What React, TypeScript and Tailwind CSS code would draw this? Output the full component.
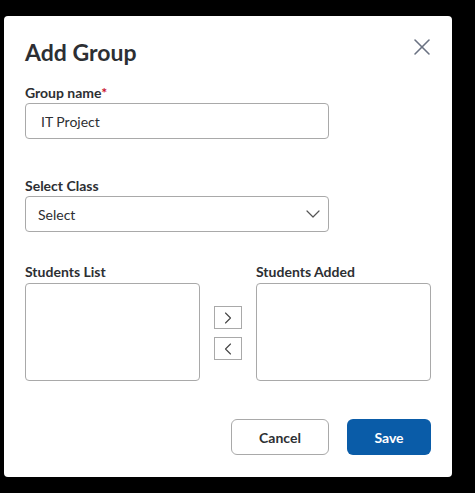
import React from 'react';
import { X, ChevronDown, ChevronRight, ChevronLeft } from 'lucide-react';

const font = { fontFamily: 'Lato, "Noto Sans", sans-serif' };

export default function App() {
  return (
    <div className="w-[475px] h-[493px] bg-black overflow-hidden" style={font}>
      <div className="ml-[4px] mt-[16px] w-[448px] h-[461px] bg-white rounded-[4px] px-[21px] pt-[22px] relative flex flex-col">
        <button className="absolute right-[16px] top-[17px] text-gray-500">
          <X size={28} strokeWidth={1.3} />
        </button>

        <h1 className="text-[23px] leading-[28px] font-bold text-[#2d2f33]">Add Group</h1>

        <label className="mt-[18px] text-[14px] leading-[18px] font-bold text-[#2d2f33]">
          Group name<span className="text-[#c8102e]">*</span>
        </label>
        <div className="mt-[1px] w-[304px] h-[36px] border border-[#a9a9a9] rounded-[4px] flex items-center px-[15px] text-[14px] text-[#2d2f33]">
          IT Project
        </div>

        <label className="mt-[38px] text-[14px] leading-[18px] font-bold text-[#2d2f33]">Select Class</label>
        <div className="mt-[1px] w-[304px] h-[36px] border border-[#a9a9a9] rounded-[4px] flex items-center justify-between pl-[12px] pr-[3px] text-[14px] text-[#2d2f33]">
          <span>Select</span>
          <ChevronDown size={24} strokeWidth={1.2} className="text-[#555]" />
        </div>

        <div className="mt-[31px] flex">
          <div className="flex flex-col w-[175px]">
            <label className="text-[14px] leading-[18px] font-bold text-[#2d2f33]">Students List</label>
            <div className="mt-[2px] h-[98px] border border-[#a9a9a9] rounded-[4px]" />
          </div>
          <div className="w-[56px] flex flex-col items-center pt-[43px] gap-[8px]">
            <button className="w-[28px] h-[23px] border border-[#a9a9a9] flex items-center justify-center text-[#444]">
              <ChevronRight size={20} strokeWidth={1.3} />
            </button>
            <button className="w-[28px] h-[23px] border border-[#a9a9a9] flex items-center justify-center text-[#444]">
              <ChevronLeft size={20} strokeWidth={1.3} />
            </button>
          </div>
          <div className="flex flex-col w-[175px]">
            <label className="text-[14px] leading-[18px] font-bold text-[#2d2f33]">Students Added</label>
            <div className="mt-[2px] h-[98px] border border-[#a9a9a9] rounded-[4px]" />
          </div>
        </div>

        <div className="mt-[38px] flex justify-end gap-[18px]">
          <button className="w-[98px] h-[36px] border border-[#a9a9a9] rounded-[6px] text-[14px] font-bold text-[#2d2f33]">
            Cancel
          </button>
          <button className="w-[84px] h-[36px] rounded-[6px] bg-[#0a5ca8] text-[14px] font-bold text-white">
            Save
          </button>
        </div>
      </div>
    </div>
  );
}
